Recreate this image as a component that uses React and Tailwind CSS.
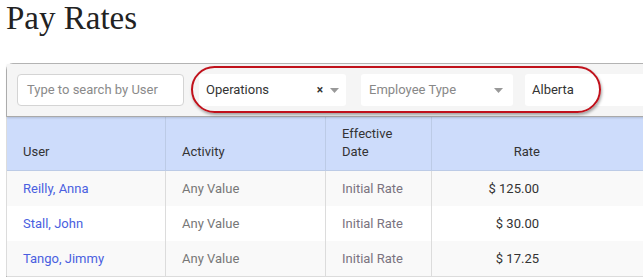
import React from "react";

const rows = [
  { user: "Reilly, Anna", rate: "$ 125.00", bg: "bg-[#f9f9f9]" },
  { user: "Stall, John", rate: "$ 30.00", bg: "bg-white" },
  { user: "Tango, Jimmy", rate: "$ 17.25", bg: "bg-[#f9f9f9]" },
];

function Caret() {
  return (
    <svg width="9" height="5" viewBox="0 0 9 5" className="shrink-0">
      <path d="M0 0h9L4.5 5z" fill="#999" />
    </svg>
  );
}

export default function App() {
  return (
    <div className="w-[643px] h-[280px] overflow-hidden bg-white font-['Roboto',sans-serif] text-[13px]">
      <h1 className="pl-[6px] h-[63px] font-['Liberation_Serif',serif] text-[33px] leading-[36px] text-[#222]">
        Pay Rates
      </h1>
      <div className="ml-[6px] border-l border-t border-[#b5b5b5] rounded-tl-[7px] w-[760px]">
        <div className="relative h-[53px] bg-[#f5f5f5] border-b border-[#a9a9a9] flex items-center pl-[10px] shadow-[0_1px_2px_rgba(0,0,0,0.15)]">
          <div className="shrink-0 w-[167px] h-[32px] bg-white border border-[#d4d4d4] rounded-[4px] flex items-center pl-[9px] text-[#8a8a8a]">
            Type to search by User
          </div>
          <div className="shrink-0 ml-[15px] w-[147px] h-[32px] bg-white rounded-[3px] flex items-center pl-[7px] pr-[7px] text-[#333]">
            <span className="flex-1">Operations</span>
            <span className="text-[#333] text-[12px] font-bold mr-[7px] leading-none">×</span>
            <Caret />
          </div>
          <div className="shrink-0 ml-[15px] w-[152px] h-[32px] bg-white rounded-[3px] flex items-center pl-[8px] pr-[10px] text-[#888]">
            <span className="flex-1">Employee Type</span>
            <Caret />
          </div>
          <div className="shrink-0 ml-[12px] w-[200px] h-[32px] bg-white rounded-[3px] flex items-center pl-[7px] text-[#333]">
            Alberta
          </div>
          <div className="absolute left-[184px] top-[2px] w-[410px] h-[47px] rounded-[24px] border-2 border-[#c0111b] shadow-[1px_2px_3px_rgba(0,0,0,0.35)] pointer-events-none" />
        </div>
        <div className="grid grid-cols-[159px_160px_106px_1fr] border-l border-[#dcdcdc] -ml-px">
          <div className="h-[54px] bg-[#cddcfb] border-r border-b border-[#bccbe6] flex items-end pb-[9px] pl-[16px] text-[#333] leading-[18px]">User</div>
          <div className="h-[54px] bg-[#cddcfb] border-r border-b border-[#bccbe6] flex items-end pb-[9px] pl-[16px] text-[#333] leading-[18px]">Activity</div>
          <div className="h-[54px] bg-[#cddcfb] border-r border-b border-[#bccbe6] flex items-end pb-[9px] pl-[16px] text-[#333] leading-[18px]">Effective<br />Date</div>
          <div className="h-[54px] bg-[#cddcfb] border-b border-[#bccbe6] flex items-end pb-[9px] text-[#333] leading-[18px]">
            <span className="w-[108px] text-right">Rate</span>
          </div>
          {rows.map((r, i) => (
            <React.Fragment key={i}>
              <div className={`${r.bg} h-[35px] border-r border-[#dcdcdc] flex items-center pl-[16px] text-[#4a5fe0]`}>{r.user}</div>
              <div className={`${r.bg} h-[35px] border-r border-[#dcdcdc] flex items-center pl-[16px] text-[#777]`}>Any Value</div>
              <div className={`${r.bg} h-[35px] border-r border-[#dcdcdc] flex items-center pl-[16px] text-[#7a7380]`}>Initial Rate</div>
              <div className={`${r.bg} h-[35px] flex items-center text-[#333]`}>
                <span className="w-[107px] text-right">{r.rate}</span>
              </div>
            </React.Fragment>
          ))}
        </div>
        <div className="h-px bg-[#dcdcdc]" />
      </div>
    </div>
  );
}
